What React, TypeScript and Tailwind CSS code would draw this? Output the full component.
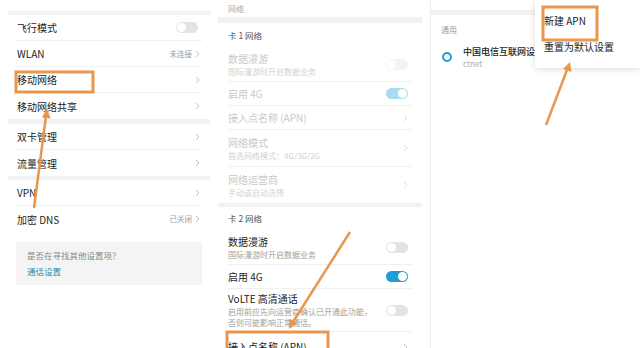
const FONT = "font-['Noto_Sans_CJK_SC','Noto_Sans',sans-serif]";

function Toggle({ on, faded }: { on?: boolean; faded?: boolean }) {
  const track = on
    ? faded ? "bg-[#a9dcef]" : "bg-[#1f9ed5]"
    : faded ? "bg-[#f4f4f4]" : "bg-[#e3e3e3]";
  return (
    <div className={`relative w-[22px] h-[11px] rounded-full ${track}`}>
      <div className={`absolute top-[1px] w-[9px] h-[9px] rounded-full bg-white ${on ? "right-[1px]" : "left-[1px]"}`} />
    </div>
  );
}

function Chevron({ light }: { light?: boolean }) {
  return (
    <svg width="5" height="8" viewBox="0 0 5 8" className="ml-[3px]">
      <polyline points="1,1 4,4 1,7" fill="none" stroke={light ? "#dddddd" : "#c4c4c4"} strokeWidth="1" />
    </svg>
  );
}

interface LeftRowProps {
  label: string;
  value?: string;
  toggle?: boolean;
  last?: boolean;
}

function LeftRow(props: LeftRowProps) {
  return (
    <div className={`h-[26px] shrink-0 flex items-center justify-between ${props.last ? "" : "border-b border-[#f0f0f0]"}`}>
      <p className="text-[10px] text-[#1c1c1c] pl-[1px]">{props.label}</p>
      {props.toggle ? (
        <div className="mr-[4px]"><Toggle /></div>
      ) : (
        <div className="flex items-center mr-[2px]">
          {props.value && <span className="text-[7.5px] text-[#9a9a9a]">{props.value}</span>}
          <Chevron />
        </div>
      )}
    </div>
  );
}

interface MidRowProps {
  title: string;
  sub?: string[];
  toggle?: "on" | "off";
  disabled?: boolean;
  last?: boolean;
  h: string;
}

function MidRow(props: MidRowProps) {
  const titleColor = props.disabled ? "text-[#c9c9c9]" : "text-[#1c1c1c]";
  const subColor = props.disabled ? "text-[#d2d2d2]" : "text-[#a0a0a0]";
  return (
    <div className={`${props.h} shrink-0 flex items-center justify-between ${props.last ? "" : "border-b border-[#f0f0f0]"}`}>
      <div className="flex flex-col">
        <p className={`text-[10px] leading-[14px] ${titleColor}`}>{props.title}</p>
        {props.sub?.map((s) => (
          <p key={s} className={`text-[8px] leading-[11px] ${subColor}`}>{s}</p>
        ))}
      </div>
      {props.toggle ? (
        <div className="mr-[4px]"><Toggle on={props.toggle === "on"} faded={props.disabled} /></div>
      ) : (
        <div className="mr-[4px]"><Chevron light={props.disabled} /></div>
      )}
    </div>
  );
}

function Band({ h }: { h: string }) {
  return <div className={`${h} shrink-0 bg-[#f2f2f2]`} />;
}

function LeftPanel() {
  return (
    <div className="w-[202px] ml-[8px] self-start flex flex-col">
      <div className="h-[11px]" />
      <Band h="h-[4px]" />
      <div className="px-[8px]">
        <LeftRow label="飞行模式" toggle />
        <LeftRow label="WLAN" value="未连接" />
        <LeftRow label="移动网络" />
        <LeftRow label="移动网络共享" last />
      </div>
      <Band h="h-[5px]" />
      <div className="px-[8px]">
        <LeftRow label="双卡管理" />
        <LeftRow label="流量管理" last />
      </div>
      <Band h="h-[4px]" />
      <div className="px-[8px]">
        <LeftRow label="VPN" />
        <LeftRow label="加密 DNS" value="已关闭" last />
      </div>
      <div className="mx-[8px] mt-[10px] h-[43px] bg-[#f4f4f4] px-[11px] flex flex-col justify-center gap-[5px]">
        <p className="text-[8.5px] leading-[11px] text-[#888]">是否在寻找其他设置项？</p>
        <p className="text-[8.5px] leading-[11px] text-[#1c8fb0]">通话设置</p>
      </div>
    </div>
  );
}

function MidPanel() {
  return (
    <div className="w-[204px] ml-[8px] self-start flex flex-col">
      <div className="h-[17px] shrink-0 px-[10px] flex items-end">
        <p className="text-[8px] leading-[10px] text-[#aaa] mb-[3px]">网络</p>
      </div>
      <Band h="h-[6px]" />
      <div className="px-[10px]">
        <div className="h-[24px] flex items-center">
          <p className="text-[8.5px] text-[#555]">卡 1 网络</p>
        </div>
        <MidRow h="h-[35px]" title="数据漫游" sub={["国际漫游时开启数据业务"]} toggle="off" disabled />
        <MidRow h="h-[24px]" title="启用 4G" toggle="on" disabled />
        <MidRow h="h-[24px]" title="接入点名称 (APN)" disabled />
        <MidRow h="h-[37px]" title="网络模式" sub={["首选网络模式：4G/3G/2G"]} disabled />
        <MidRow h="h-[36px]" title="网络运营商" sub={["手动或自动选择"]} disabled last />
      </div>
      <Band h="h-[4px]" />
      <div className="px-[10px]">
        <div className="h-[23px] flex items-center">
          <p className="text-[8.5px] text-[#555]">卡 2 网络</p>
        </div>
        <MidRow h="h-[35px]" title="数据漫游" sub={["国际漫游时开启数据业务"]} toggle="off" />
        <MidRow h="h-[24px]" title="启用 4G" toggle="on" />
        <MidRow h="h-[43px]" title="VoLTE 高清通话" sub={["启用前应先向运营商确认已开通此功能，", "否则可能影响正常通话。"]} toggle="off" />
        <MidRow h="h-[30px]" title="接入点名称 (APN)" last />
      </div>
    </div>
  );
}

function RightPanel() {
  return (
    <div className="relative flex-1 ml-[8px] border-l border-[#ececec] flex flex-col">
      <div className="h-[10px]" />
      <Band h="h-[5px]" />
      <div className="h-[30px] px-[10px] flex items-center">
        <p className="text-[8px] text-[#999]">通用</p>
      </div>
      <div className="flex items-center px-[11px] gap-[11px]">
        <div className="w-[10px] h-[10px] rounded-full border-[2.5px] border-[#1f9ed5]" />
        <div className="flex flex-col">
          <p className="text-[9px] leading-[13px] text-[#1c1c1c] font-medium whitespace-nowrap">中国电信互联网设置</p>
          <p className="text-[8px] leading-[11px] text-[#aaa]">ctnet</p>
        </div>
      </div>
      <div className="absolute left-[104px] top-0 w-[106px] h-[68px] bg-white shadow-[0_1px_6px_rgba(0,0,0,0.15)] flex flex-col pl-[9px] pt-[14px] gap-[12px]">
        <p className="text-[10px] leading-[14px] text-[#1c1c1c]">新建 APN</p>
        <p className="text-[10px] leading-[14px] text-[#1c1c1c]">重置为默认设置</p>
      </div>
    </div>
  );
}

function Annotations() {
  const c = "#e9964f";
  return (
    <svg className="absolute inset-0 pointer-events-none" width="640" height="348" viewBox="0 0 640 348">
      <rect x="16" y="72" width="77" height="20" fill="none" stroke={c} strokeWidth="3" />
      <rect x="227" y="332" width="101" height="20" fill="none" stroke={c} strokeWidth="3" />
      <rect x="543" y="7" width="54" height="33" fill="none" stroke={c} strokeWidth="3" />
      <line x1="34" y1="208" x2="46" y2="116" stroke={c} strokeWidth="2.5" />
      <polygon points="47,108 50.5,118.5 42,117.5" fill={c} />
      <line x1="350" y1="232" x2="293" y2="322" stroke={c} strokeWidth="2.5" />
      <polygon points="289,329 297,323.5 289.5,318.5" fill={c} />
      <line x1="546" y1="125" x2="567" y2="70" stroke={c} strokeWidth="2.5" />
      <polygon points="570,62 571.5,72 563,69" fill={c} />
    </svg>
  );
}

export default function App() {
  return (
    <div className={`relative w-[640px] h-[348px] overflow-hidden bg-white flex ${FONT}`}>
      <LeftPanel />
      <MidPanel />
      <RightPanel />
      <Annotations />
    </div>
  );
}
